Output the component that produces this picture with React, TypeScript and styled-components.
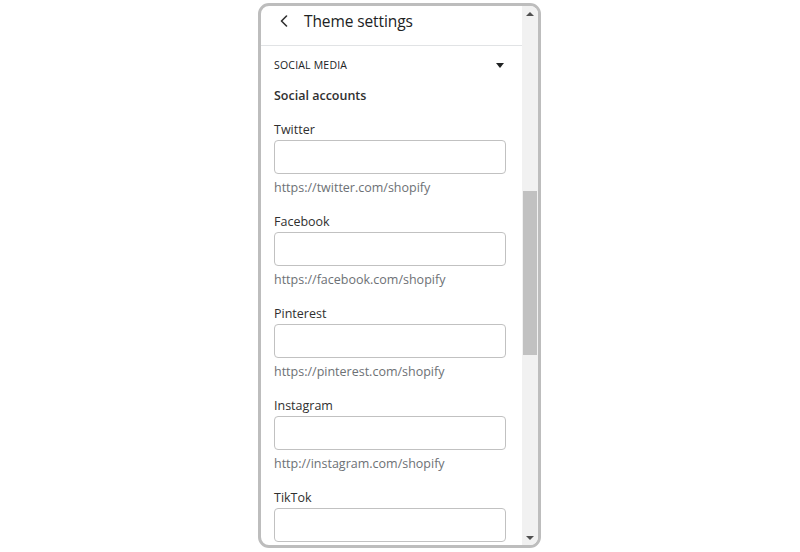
import React from "react";
import styled, { createGlobalStyle } from "styled-components";

const Global = createGlobalStyle`
  html, body { margin: 0; padding: 0; background: #fff; }
  body { font-family: "Open Sans", "Noto Sans", sans-serif; width: 800px; height: 552px; overflow: hidden; }
`;

const Page = styled.div`
  width: 800px;
  height: 552px;
  display: flex;
  padding: 3px 0 0 258px;
  box-sizing: border-box;
`;

const Frame = styled.div`
  width: 283px;
  height: 545px;
  box-sizing: border-box;
  border: 3px solid #bdbdbd;
  border-radius: 11px;
  overflow: hidden;
  display: flex;
  background: #fff;
`;

const Panel = styled.div`
  flex: 1;
  display: flex;
  flex-direction: column;
  overflow: hidden;
`;

const Header = styled.div`
  height: 40px;
  box-sizing: border-box;
  flex-shrink: 0;
  border-bottom: 1px solid #e1e3e5;
  display: flex;
  align-items: center;
  padding: 0 0 9px 17px;
  gap: 14px;
`;

const BackButton = styled.span`
  width: 12px;
  height: 14px;
  display: flex;
  align-items: center;
  justify-content: center;
`;

const Title = styled.h1`
  margin: 0;
  font-size: 15.5px;
  font-weight: 500;
  color: #202223;
  letter-spacing: -0.1px;
`;

const Body = styled.div`
  padding: 11px 16px 0 13px;
  display: flex;
  flex-direction: column;
`;

const SectionRow = styled.div`
  display: flex;
  align-items: center;
  justify-content: space-between;
  height: 16px;
`;

const SectionTitle = styled.span`
  font-size: 10.5px;
  color: #202223;
  letter-spacing: 0.2px;
`;

const Caret = styled.span`
  width: 0;
  height: 0;
  border-left: 4px solid transparent;
  border-right: 4px solid transparent;
  border-top: 5px solid #202223;
  margin-right: 2px;
`;

const Subheading = styled.h2`
  margin: 13px 0 0;
  font-size: 12.5px;
  font-weight: 600;
  line-height: 20px;
  color: #303030;
`;

const Field = styled.div`
  display: flex;
  flex-direction: column;
  margin-top: 15px;
`;

const Label = styled.label`
  font-size: 12.5px;
  line-height: 18px;
  color: #303030;
  margin-bottom: 1px;
`;

const Input = styled.input`
  height: 34px;
  box-sizing: border-box;
  border: 1px solid #c1c1c1;
  border-radius: 4px;
  padding: 0 8px;
  font: inherit;
  outline: none;
  width: 100%;
`;

const Hint = styled.span`
  margin-top: 4px;
  font-size: 12.5px;
  line-height: 20px;
  color: #6d7175;
`;

const Scrollbar = styled.div`
  width: 16px;
  flex-shrink: 0;
  background: #f1f1f1;
  display: flex;
  flex-direction: column;
  align-items: center;
`;

const Arrow = styled.span<{ $down?: boolean }>`
  height: 15px;
  display: flex;
  align-items: center;
  justify-content: center;
  &::after {
    content: "";
    width: 0;
    height: 0;
    border-left: 4px solid transparent;
    border-right: 4px solid transparent;
    ${(p) => (p.$down ? "border-top: 4px solid #505050;" : "border-bottom: 4px solid #505050;")}
  }
`;

const Track = styled.div`
  flex: 1;
  width: 100%;
  display: flex;
  flex-direction: column;
  align-items: center;
`;

const Thumb = styled.div<{ $top: number; $size: number }>`
  width: 14px;
  margin-top: ${(p) => p.$top}px;
  height: ${(p) => p.$size}px;
  background: #c1c1c1;
`;

const fields: { label: string; hint?: string }[] = [
  { label: "Twitter", hint: "https://twitter.com/shopify" },
  { label: "Facebook", hint: "https://facebook.com/shopify" },
  { label: "Pinterest", hint: "https://pinterest.com/shopify" },
  { label: "Instagram", hint: "http://instagram.com/shopify" },
  { label: "TikTok" },
];

export default function App() {
  return (
    <>
      <Global />
      <Page>
        <Frame>
          <Panel>
            <Header>
              <BackButton>
                <svg width="8" height="12" viewBox="0 0 8 12">
                  <path d="M6.5 1 L1.5 6 L6.5 11" fill="none" stroke="#303030" strokeWidth="1.6" strokeLinecap="round" strokeLinejoin="round" />
                </svg>
              </BackButton>
              <Title>Theme settings</Title>
            </Header>
            <Body>
              <SectionRow>
                <SectionTitle>SOCIAL MEDIA</SectionTitle>
                <Caret />
              </SectionRow>
              <Subheading>Social accounts</Subheading>
              {fields.map((f) => (
                <Field key={f.label}>
                  <Label>{f.label}</Label>
                  <Input type="text" />
                  {f.hint && <Hint>{f.hint}</Hint>}
                </Field>
              ))}
            </Body>
          </Panel>
          <Scrollbar>
            <Arrow />
            <Track>
              <Thumb $top={170} $size={164} />
            </Track>
            <Arrow $down />
          </Scrollbar>
        </Frame>
      </Page>
    </>
  );
}
